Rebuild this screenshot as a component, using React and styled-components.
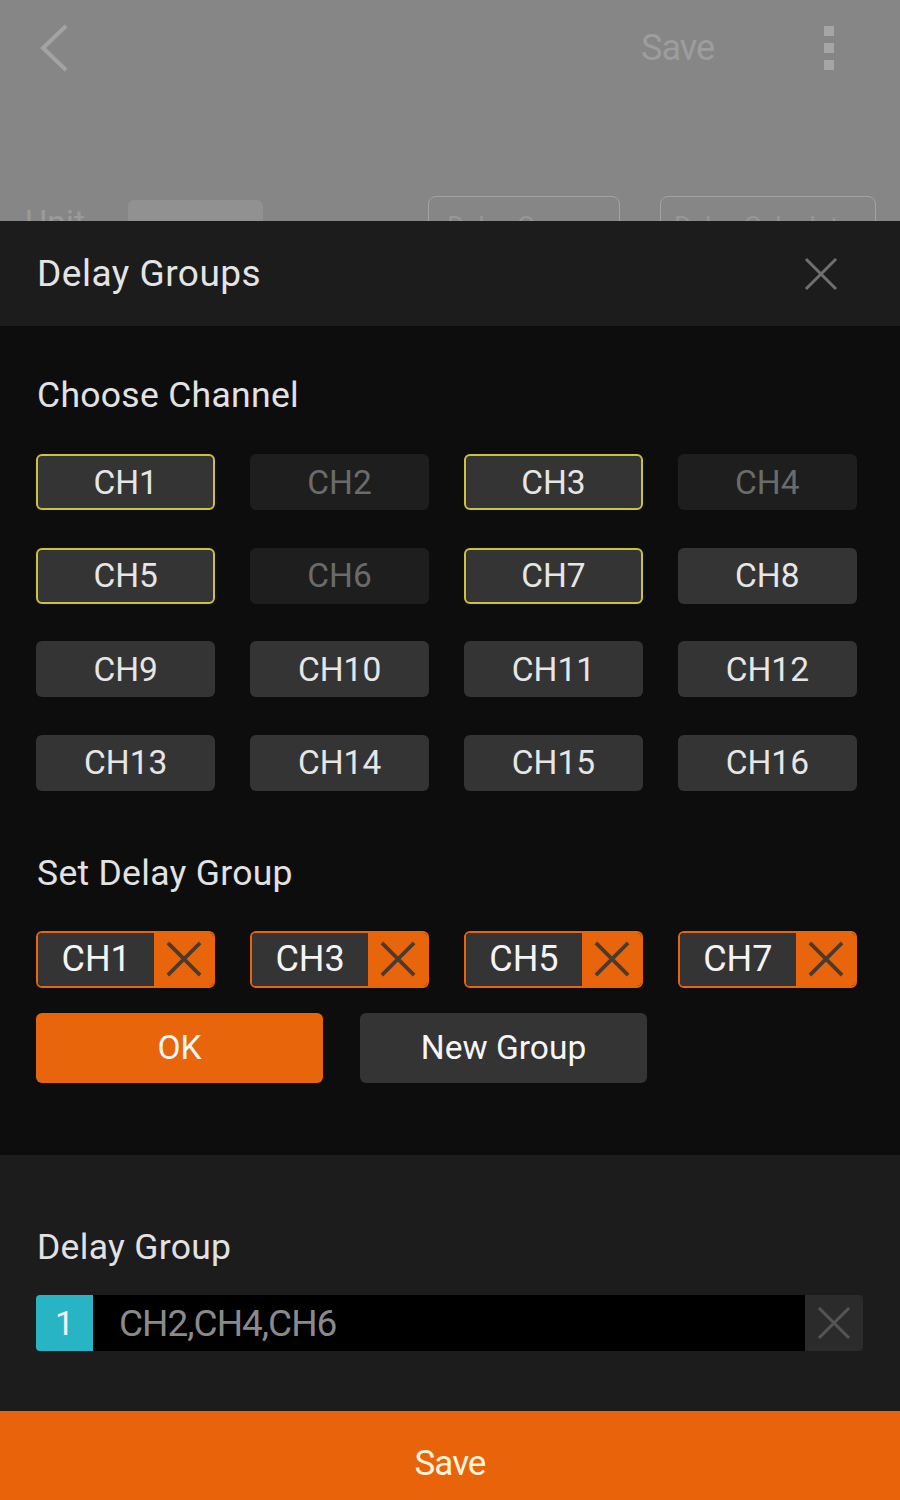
import React from "react";
import styled, { createGlobalStyle } from "styled-components";

const GlobalStyle = createGlobalStyle`
  body {
    margin: 0;
    background: #0d0d0d;
    font-family: Roboto, "Noto Sans", "Liberation Sans", sans-serif;
  }
  * {
    box-sizing: border-box;
  }
`;

const channels = Array.from({ length: 16 }, (_, i) => {
  const n = i + 1;
  let state = "normal";
  if ([1, 3, 5, 7].includes(n)) state = "selected";
  if ([2, 4, 6].includes(n)) state = "disabled";
  return { name: "CH" + n, state };
});

const groupTags = ["CH1", "CH3", "CH5", "CH7"];

// X 아이콘
const Cross = ({ size = 34, color = "#777", stroke = 3 }) => (
  <svg width={size} height={size} viewBox="0 0 34 34">
    <path
      d="M3 3 L31 31 M31 3 L3 31"
      stroke={color}
      strokeWidth={stroke}
      strokeLinecap="square"
      fill="none"
    />
  </svg>
);

const App = () => {
  return (
    <Page>
      <GlobalStyle />
      {/* 뒤에 깔린 화면 (어둡게 처리됨) */}
      <Backdrop>
        <AppBar>
          <svg width="32" height="50" viewBox="0 0 32 50">
            <path d="M28 3 L5 25 L28 47" stroke="#a3a3a3" strokeWidth="4" fill="none" />
          </svg>
          <BarSave>Save</BarSave>
          <Dots>
            <i />
            <i />
            <i />
          </Dots>
        </AppBar>
        <BackRow>
          <UnitLabel>Unit</UnitLabel>
          <UnitBox>ms</UnitBox>
          <Spacer />
          <GhostBtn $w={192}>Delay Groups</GhostBtn>
          <GhostBtn $w={216}>Delay Calculator</GhostBtn>
        </BackRow>
      </Backdrop>

      <Sheet>
        <SheetHeader>
          <HeaderTitle>Delay Groups</HeaderTitle>
          <CloseBtn>
            <Cross size={34} color="#6f6f6f" stroke={3} />
          </CloseBtn>
        </SheetHeader>

        <Main>
          <SectionTitle>Choose Channel</SectionTitle>
          <ChannelGrid>
            {channels.map((c) => (
              <ChannelBtn key={c.name} $state={c.state}>
                {c.name}
              </ChannelBtn>
            ))}
          </ChannelGrid>

          <SectionTitle $top={62}>Set Delay Group</SectionTitle>
          <TagGrid>
            {groupTags.map((t) => (
              <Tag key={t}>
                <TagName>{t}</TagName>
                <TagRemove>
                  <Cross size={36} color="#4b3a2e" stroke={3.5} />
                </TagRemove>
              </Tag>
            ))}
          </TagGrid>
          <ActionRow>
            <ActionBtn $primary>OK</ActionBtn>
            <ActionBtn>New Group</ActionBtn>
          </ActionRow>
        </Main>

        <GroupList>
          <SectionTitle>Delay Group</SectionTitle>
          <GroupRow>
            <GroupIndex>1</GroupIndex>
            <GroupChannels>CH2,CH4,CH6</GroupChannels>
            <GroupRemove>
              <Cross size={34} color="#555" stroke={3} />
            </GroupRemove>
          </GroupRow>
        </GroupList>

        <SaveBar>Save</SaveBar>
      </Sheet>
    </Page>
  );
};

// Style적용
const Page = styled.div`
  width: 900px;
  height: 1500px;
  display: flex;
  flex-direction: column;
  overflow: hidden;
`;

const Backdrop = styled.div`
  height: 221px;
  flex-shrink: 0;
  background: #868686;
  display: flex;
  flex-direction: column;
  overflow: hidden;
  & > * {
    flex-shrink: 0;
  }
`;

const AppBar = styled.div`
  height: 95px;
  display: flex;
  align-items: center;
  padding: 0 0 0 38px;
`;

const BarSave = styled.span`
  margin-left: auto;
  font-size: 36px;
  color: #9d9d9d;
  letter-spacing: -1px;
`;

const Dots = styled.div`
  width: 14px;
  margin: 0 64px 0 108px;
  display: flex;
  flex-direction: column;
  align-items: center;
  gap: 7px;
  i {
    width: 10px;
    height: 10px;
    background: #a5a5a5;
  }
`;

const BackRow = styled.div`
  margin-top: 101px;
  display: flex;
  align-items: flex-start;
  padding: 0 24px 0 25px;
  color: #9a9a9a;
  font-size: 34px;
`;

const UnitLabel = styled.span`
  margin-top: 6px;
  width: 103px;
`;

const UnitBox = styled.div`
  width: 135px;
  height: 40px;
  margin-top: 4px;
  border-radius: 6px;
  background: #919191;
  text-align: center;
  padding-top: 10px;
`;

const Spacer = styled.div`
  flex: 1;
`;

const GhostBtn = styled.div`
  width: ${(p) => p.$w}px;
  height: 50px;
  margin-left: 40px;
  border: 1px solid #a2a2a2;
  border-radius: 8px;
  font-size: 26px;
  padding-top: 14px;
  text-align: center;
  color: #979797;
`;

const Sheet = styled.div`
  flex: 1;
  display: flex;
  flex-direction: column;
`;

const SheetHeader = styled.div`
  height: 105px;
  background: #1c1c1c;
  display: flex;
  align-items: center;
  padding: 0 62px 0 37px;
`;

const HeaderTitle = styled.h1`
  margin: 0;
  font-size: 37px;
  font-weight: 400;
  letter-spacing: 0.5px;
  color: #e4e4e4;
`;

const CloseBtn = styled.div`
  margin-left: auto;
  display: flex;
`;

const Main = styled.div`
  background: #0d0d0d;
  padding: 49px 43px 73px 36px;
  height: 829px;
`;

const SectionTitle = styled.h2`
  margin: ${(p) => (p.$top ? p.$top : 0)}px 0 0 1px;
  height: 40px;
  line-height: 40px;
  font-size: 35.5px;
  font-weight: 400;
  letter-spacing: 0.3px;
  color: #e2e2e2;
`;

const ChannelGrid = styled.div`
  margin-top: 39px;
  display: grid;
  grid-template-columns: repeat(4, 1fr);
  column-gap: 34.5px;
  row-gap: 37.5px;
`;

const ChannelBtn = styled.div`
  height: 56px;
  border-radius: 6px;
  display: flex;
  align-items: center;
  justify-content: center;
  font-size: 33.5px;
  background: ${(p) => (p.$state === "disabled" ? "#1e1e1e" : "#343434")};
  color: ${(p) => (p.$state === "disabled" ? "#6b6b6b" : "#e6e6e6")};
  border: 2px solid ${(p) => (p.$state === "selected" ? "#cdc33a" : "transparent")};
`;

const TagGrid = styled.div`
  margin-top: 38px;
  display: grid;
  grid-template-columns: repeat(4, 1fr);
  column-gap: 34.5px;
`;

const Tag = styled.div`
  height: 57px;
  display: flex;
  border: 2px solid #e8650c;
  border-radius: 6px;
  overflow: hidden;
`;

const TagName = styled.div`
  flex: 1;
  background: #343434;
  display: flex;
  align-items: center;
  justify-content: center;
  font-size: 36px;
  color: #f4f4f4;
`;

const TagRemove = styled.div`
  width: 59px;
  background: #e8650c;
  display: flex;
  align-items: center;
  justify-content: center;
`;

const ActionRow = styled.div`
  margin-top: 25px;
  display: flex;
  gap: 37px;
`;

const ActionBtn = styled.div`
  width: 287px;
  height: 70px;
  border-radius: 6px;
  display: flex;
  align-items: center;
  justify-content: center;
  font-size: 33.5px;
  color: #f6f6f6;
  background: ${(p) => (p.$primary ? "#e8650c" : "#343434")};
`;

const GroupList = styled.div`
  background: #1c1c1c;
  padding: 72px 37px 60px 36px;
  height: 256px;
`;

const GroupRow = styled.div`
  margin-top: 28px;
  height: 56px;
  display: flex;
  border-radius: 4px;
  overflow: hidden;
`;

const GroupIndex = styled.div`
  width: 57px;
  background: #27b4c4;
  color: #f2f2f2;
  font-size: 34px;
  display: flex;
  align-items: center;
  justify-content: center;
`;

const GroupChannels = styled.div`
  flex: 1;
  background: #000;
  color: #8a8a8a;
  font-size: 37px;
  letter-spacing: -1px;
  display: flex;
  align-items: center;
  padding-left: 26px;
`;

const GroupRemove = styled.div`
  width: 58px;
  background: #2b2b2b;
  display: flex;
  align-items: center;
  justify-content: center;
`;

const SaveBar = styled.div`
  flex: 1;
  background: #e8630a;
  display: flex;
  align-items: center;
  justify-content: center;
  padding-top: 16px;
  font-size: 35px;
  color: #fff6dc;
  letter-spacing: -1px;
`;

export default App;
